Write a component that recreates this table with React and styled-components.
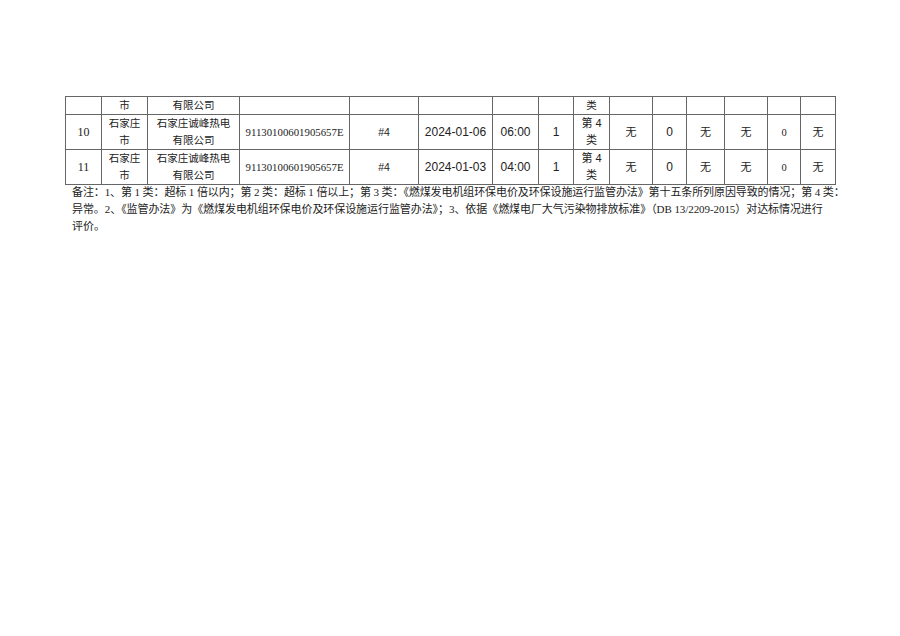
import React from 'react'
import styled, { createGlobalStyle } from 'styled-components'

const GlobalStyle = createGlobalStyle`
  html, body {
    margin: 0;
    padding: 0;
    background: #ffffff;
  }
  body {
    width: 900px;
    height: 636px;
    overflow: hidden;
    font-family: "Liberation Serif", "Noto Sans CJK SC", serif;
    color: #111;
  }
`

const colWidths = [36, 46, 92, 110, 69, 74, 46, 35, 36, 43, 34, 38, 43, 33, 35]

const baseRow = {
  city: ['石家庄', '市'],
  company: ['石家庄诚峰热电', '有限公司'],
  code: '91130100601905657E',
  unit: '#4',
  count: '1',
}

const dataRows = [
  { ...baseRow, no: '10', date: '2024-01-06', time: '06:00' },
  { ...baseRow, no: '11', date: '2024-01-03', time: '04:00' },
]

const Page = styled.div`
  padding: 96px 0 0 65px;
`

const Table = styled.table`
  border-collapse: collapse;
  table-layout: fixed;
  width: 771px;
`

const Cell = styled.td`
  border: 1px solid #666;
  padding: 0;
  text-align: center;
  vertical-align: middle;
  font-family: ${({ sans }) => (sans ? '"Liberation Sans", "Noto Sans CJK SC", sans-serif' : '"Liberation Serif", "Noto Sans CJK SC", serif')};
  font-size: ${({ size }) => size || 12}px;
  line-height: 17px;
  height: ${({ h }) => h || 32}px;
  color: #222;
`

const Note = styled.div`
  margin: -1px 0 0 7px;
  font-size: 11px;
  line-height: 17px;
  color: #222;
  white-space: nowrap;
`

const NoteLine = styled.div`
  letter-spacing: ${({ spacing }) => spacing || 0}px;
`

const Lines = ({ items }) =>
  items.map((t, i) => (
    <React.Fragment key={i}>
      {i > 0 && <br />}
      {t}
    </React.Fragment>
  ))

const DataRow = ({ row }) => (
  <tr>
    <Cell>{row.no}</Cell>
    <Cell size={10.5}><Lines items={row.city} /></Cell>
    <Cell size={10.5}><Lines items={row.company} /></Cell>
    <Cell size={10.8}>{row.code}</Cell>
    <Cell sans size={10.5}>{row.unit}</Cell>
    <Cell sans>{row.date}</Cell>
    <Cell sans>{row.time}</Cell>
    <Cell sans>{row.count}</Cell>
    <Cell sans size={11}><Lines items={['第 4', '类']} /></Cell>
    <Cell sans size={11}>无</Cell>
    <Cell sans>0</Cell>
    <Cell sans size={11}>无</Cell>
    <Cell sans size={11}>无</Cell>
    <Cell size={10.5}>0</Cell>
    <Cell sans size={11}>无</Cell>
  </tr>
)

const topCells = ['', '市', '有限公司', '', '', '', '', '', '类', '', '', '', '', '', '']

export default function App() {
  return (
    <>
      <GlobalStyle />
      <Page>
        <Table>
          <colgroup>
            {colWidths.map((w, i) => (
              <col key={i} style={{ width: w }} />
            ))}
          </colgroup>
          <tbody>
            <tr>
              {topCells.map((t, i) => (
                <Cell key={i} h={17} size={10.5} sans={i === 8}>{t}</Cell>
              ))}
            </tr>
            {dataRows.map(r => (
              <DataRow key={r.no} row={r} />
            ))}
          </tbody>
        </Table>
        <Note>
          <NoteLine spacing={-0.1}>
            备注：1、第 1 类：超标 1 倍以内；第 2 类：超标 1 倍以上；第 3 类：《燃煤发电机组环保电价及环保设施运行监管办法》第十五条所列原因导致的情况；第 4 类：
          </NoteLine>
          <NoteLine spacing={-0.07}>
            异常。2、《监管办法》为《燃煤发电机组环保电价及环保设施运行监管办法》；3、依据《燃煤电厂大气污染物排放标准》（DB 13/2209-2015）对达标情况进行
          </NoteLine>
          <NoteLine>评价。</NoteLine>
        </Note>
      </Page>
    </>
  )
}
